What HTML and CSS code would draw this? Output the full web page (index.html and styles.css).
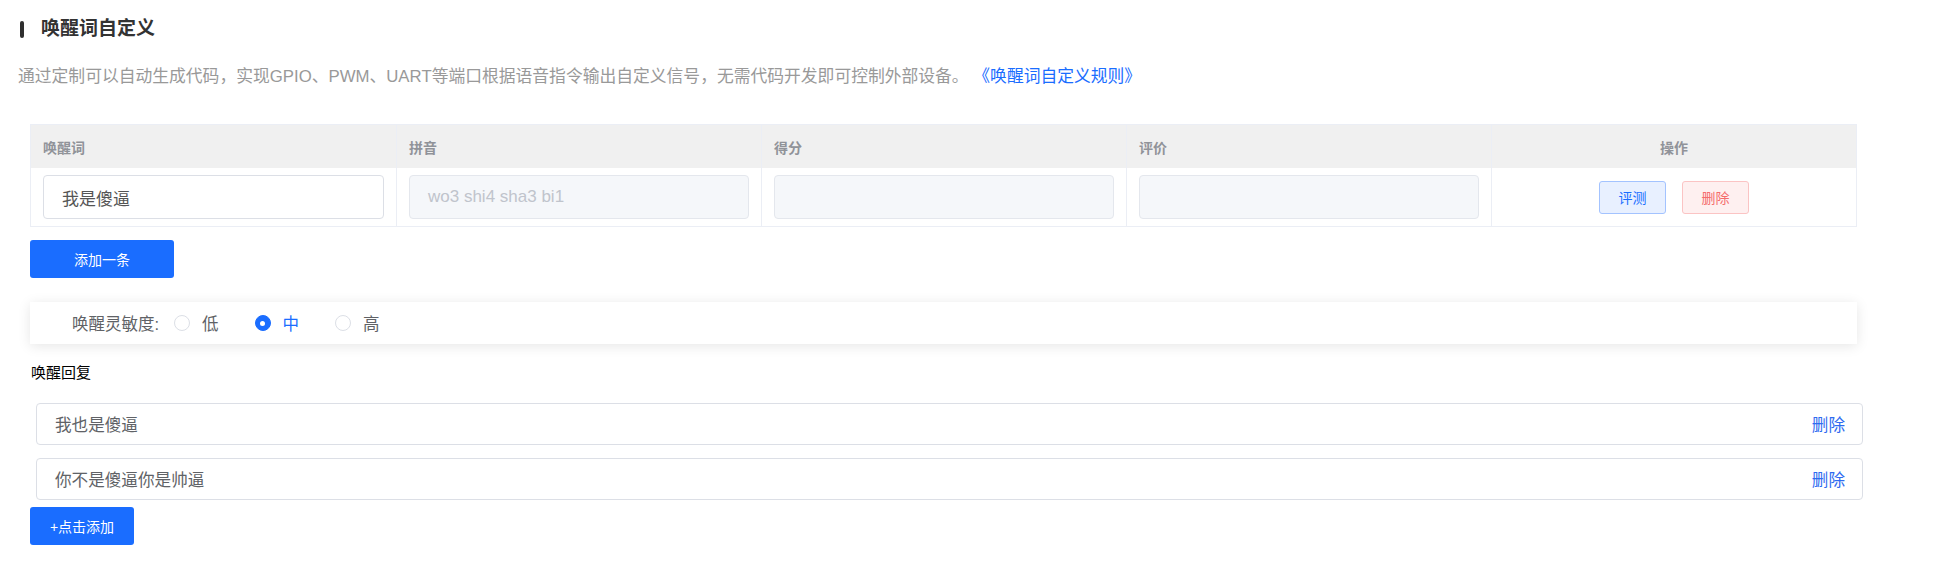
FILE: index.html
```html
<!DOCTYPE html>
<html lang="zh-CN">
<head>
<meta charset="utf-8">
<title>唤醒词自定义</title>
<link rel="stylesheet" href="styles.css">
</head>
<body>
<div class="page">
  <div class="title-row">
    <span class="title-bar"></span>
    <h1 class="title">唤醒词自定义</h1>
  </div>
  <p class="desc">通过定制可以自动生成代码，实现GPIO、PWM、UART等端口根据语音指令输出自定义信号，无需代码开发即可控制外部设备。 <a class="desc-link" href="#">《唤醒词自定义规则》</a></p>

  <div class="table">
    <div class="row head">
      <div class="cell">唤醒词</div>
      <div class="cell">拼音</div>
      <div class="cell">得分</div>
      <div class="cell">评价</div>
      <div class="cell center">操作</div>
    </div>
    <div class="row body">
      <div class="cell"><div class="input">我是傻逼</div></div>
      <div class="cell"><div class="input disabled placeholder">wo3 shi4 sha3 bi1</div></div>
      <div class="cell"><div class="input disabled"></div></div>
      <div class="cell"><div class="input disabled"></div></div>
      <div class="cell center ops">
        <button class="btn-sm blue">评测</button>
        <button class="btn-sm red">删除</button>
      </div>
    </div>
  </div>

  <button class="btn-primary add-one">添加一条</button>

  <div class="sens-card">
    <span class="sens-label">唤醒灵敏度:</span>
    <label class="radio"><span class="radio-dot"></span><span class="radio-text">低</span></label>
    <label class="radio checked"><span class="radio-dot"></span><span class="radio-text">中</span></label>
    <label class="radio"><span class="radio-dot"></span><span class="radio-text">高</span></label>
  </div>

  <div class="reply-label">唤醒回复</div>
  <div class="reply-list">
    <div class="reply-box"><span class="reply-text">我也是傻逼</span><a class="reply-del" href="#">删除</a></div>
    <div class="reply-box"><span class="reply-text">你不是傻逼你是帅逼</span><a class="reply-del" href="#">删除</a></div>
  </div>
  <button class="btn-primary add-click">+点击添加</button>
</div>
</body>
</html>
```

FILE: styles.css
```css
* { box-sizing: border-box; }
html, body { margin: 0; padding: 0; background: #fff; }
body {
  font-family: "Liberation Sans", "Noto Sans CJK SC", sans-serif;
  color: #333;
}
.page { padding-top: 20px; }

.title-row {
  display: flex;
  align-items: center;
  height: 18px;
  margin-left: 20px;
}
.title-bar {
  width: 4px;
  height: 17px;
  background: #2f2f2f;
  border-radius: 2px;
}
.title {
  margin: 0 0 0 17px;
  font-size: 19px;
  line-height: 18px;
  font-weight: 700;
  color: #333;
}

.desc {
  margin: 27px 0 0 18px;
  font-size: 16.8px;
  line-height: 24px;
  color: #999;
}
.desc-link { color: #1a6dff; text-decoration: none; }

.table {
  margin: 35px 0 0 30px;
  width: 1827px;
  border: 1px solid #ebeef5;
}
.row { display: grid; grid-template-columns: repeat(5, 1fr); }
.row .cell { border-left: 1px solid #ebeef5; }
.row .cell:first-child { border-left: none; }
.head { background: #f0f0f0; height: 43px; }
.head .cell {
  display: flex;
  align-items: center;
  padding: 0 12px;
  font-size: 14px;
  font-weight: 700;
  color: #909399;
}
.head .cell.center { justify-content: center; }
.body .cell { padding: 7px 12px; }
.body .cell.center { display: flex; justify-content: center; align-items: center; }

.input {
  height: 44px;
  border: 1px solid #dcdfe6;
  border-radius: 4px;
  padding: 0 18px;
  display: flex;
  align-items: center;
  font-size: 17px;
  color: #555;
  background: #fff;
}
.input.disabled { background: #f5f7fa; border-color: #e4e7ed; }
.input.placeholder { color: #c0c4cc; }

.ops { gap: 16px; }
.btn-sm {
  width: 67px;
  height: 33px;
  border-radius: 3px;
  font-family: inherit;
  font-size: 14px;
  cursor: pointer;
  padding: 0;
}
.btn-sm.blue { background: #e8f0ff; border: 1px solid #a3c3ff; color: #1a6dff; }
.btn-sm.red { background: #fef0f0; border: 1px solid #fbc4c4; color: #f56c6c; }

.btn-primary {
  display: block;
  height: 38px;
  border: none;
  border-radius: 3px;
  background: #1a6dff;
  color: #fff;
  font-family: inherit;
  font-size: 14px;
  padding: 0;
  cursor: pointer;
}
.add-one { width: 144px; margin: 13px 0 0 30px; }

.sens-card {
  margin: 24px 0 0 30px;
  width: 1827px;
  height: 42px;
  background: #fff;
  box-shadow: 0 2px 12px rgba(0, 0, 0, 0.1);
  display: flex;
  align-items: center;
  padding-left: 42px;
  font-size: 16.5px;
  color: #606266;
}
.sens-label { margin-right: 15px; }
.radio { display: flex; align-items: center; margin-right: 36px; cursor: pointer; }
.radio-dot {
  width: 16px;
  height: 16px;
  border: 1px solid #dcdfe6;
  border-radius: 50%;
  background: #fff;
  margin-right: 12px;
  position: relative;
}
.radio.checked .radio-dot { background: #1a6dff; border-color: #1a6dff; }
.radio.checked .radio-dot::after {
  content: "";
  position: absolute;
  left: 50%;
  top: 50%;
  width: 5px;
  height: 5px;
  margin: -2.5px 0 0 -2.5px;
  border-radius: 50%;
  background: #fff;
}
.radio.checked .radio-text { color: #1a6dff; }

.reply-label {
  margin: 19px 0 0 31px;
  font-size: 15px;
  line-height: 20px;
  color: #000;
}
.reply-list {
  margin: 20px 0 0 36px;
  width: 1827px;
  display: flex;
  flex-direction: column;
  gap: 13px;
}
.reply-box {
  height: 42px;
  border: 1px solid #dcdfe6;
  border-radius: 4px;
  display: flex;
  align-items: center;
  justify-content: space-between;
  padding: 0 17px 0 18px;
  font-size: 16.6px;
}
.reply-text { color: #606266; }
.reply-del { color: #2f6bf0; text-decoration: none; }
.add-click { width: 104px; margin: 7px 0 0 30px; }
```
